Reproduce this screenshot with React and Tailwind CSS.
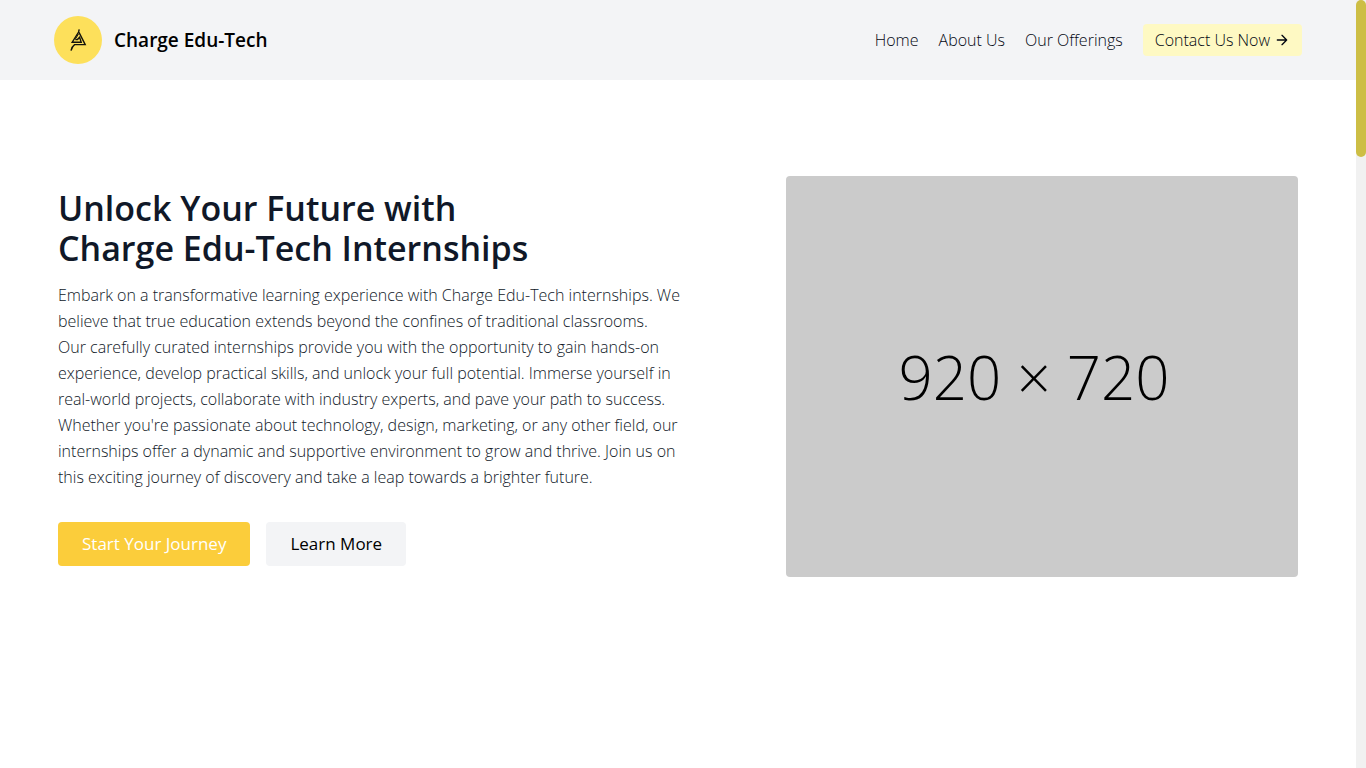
const navLinks = ["Home", "About Us", "Our Offerings"];

function Logo() {
  return (
    <svg viewBox="0 0 48 48" className="size-12 shrink-0" aria-hidden="true">
      <circle cx="24" cy="24" r="24" fill="#fde05b" />
      <g fill="none" stroke="#14140c" strokeWidth="1.4">
        <path d="M25.2 13.3 L24.6 16 L18.2 26.2 H27.2 L25.6 21.4 L23.4 23.6 H21.4" />
        <path d="M25 16.4 L31.2 28.6 H20.6 Q18 30.4 17 34.6" />
        <path d="M24.6 17.8 L21.2 23.4" strokeWidth="1" />
      </g>
    </svg>
  );
}

function ArrowRight() {
  return (
    <svg
      viewBox="0 0 24 24"
      className="size-4"
      fill="none"
      stroke="currentColor"
      strokeWidth="2"
      strokeLinecap="round"
      strokeLinejoin="round"
      aria-hidden="true"
    >
      <path d="M5 12h14M12 5l7 7-7 7" />
    </svg>
  );
}

function Header() {
  return (
    <header className="flex h-20 items-center justify-between bg-gray-100 px-[54px]">
      <a href="#home" className="flex items-center gap-3 text-[19px] font-semibold text-black">
        <Logo />
        <span>Charge Edu-Tech</span>
      </a>
      <nav className="flex items-center gap-5 font-light text-gray-950">
        {navLinks.map((label) => (
          <a key={label} href="#" className="whitespace-nowrap">
            {label}
          </a>
        ))}
        <button className="flex h-8 items-center gap-1 whitespace-nowrap rounded bg-[#fef9c3] px-3">
          Contact Us Now
          <ArrowRight />
        </button>
      </nav>
    </header>
  );
}

function Hero() {
  return (
    <section className="flex items-center justify-between gap-10 px-[58px] py-24">
      <div className="flex max-w-[632px] flex-col items-start">
        <h1 className="mb-[14px] text-[34px] leading-10 font-semibold text-gray-900">
          Unlock Your Future with
          <br />
          Charge Edu-Tech Internships
        </h1>
        <p className="mb-8 leading-[26px] font-light text-gray-900">
          Embark on a transformative learning experience with Charge Edu-Tech internships. We
          believe that true education extends beyond the confines of traditional classrooms.
          <br />
          Our carefully curated internships provide you with the opportunity to gain hands-on
          experience, develop practical skills, and unlock your full potential. Immerse yourself in
          real-world projects, collaborate with industry experts, and pave your path to success.
          Whether you're passionate about technology, design, marketing, or any other field, our
          internships offer a dynamic and supportive environment to grow and thrive. Join us on
          this exciting journey of discovery and take a leap towards a brighter future.
        </p>
        <div className="flex gap-4 text-[17px]">
          <button className="h-11 rounded bg-[#fbcd3b] px-6 text-white">Start Your Journey</button>
          <button className="h-11 rounded bg-gray-100 px-6 text-black">Learn More</button>
        </div>
      </div>
      <div className="flex aspect-[512/401] w-lg shrink-0 items-center justify-center rounded bg-[#cbcbcb] pr-4 text-6xl font-light text-black">
        920 × 720
      </div>
    </section>
  );
}

export default function App() {
  return (
    <div className="flex min-h-screen bg-white font-['Open_Sans',sans-serif]">
      <main className="min-w-0 flex-1">
        <Header />
        <Hero />
      </main>
      <div className="w-[10px] shrink-0 bg-[#f1f1f1]" aria-hidden="true">
        <div className="h-[157px] rounded-full bg-[#cdbe45]" />
      </div>
    </div>
  );
}
